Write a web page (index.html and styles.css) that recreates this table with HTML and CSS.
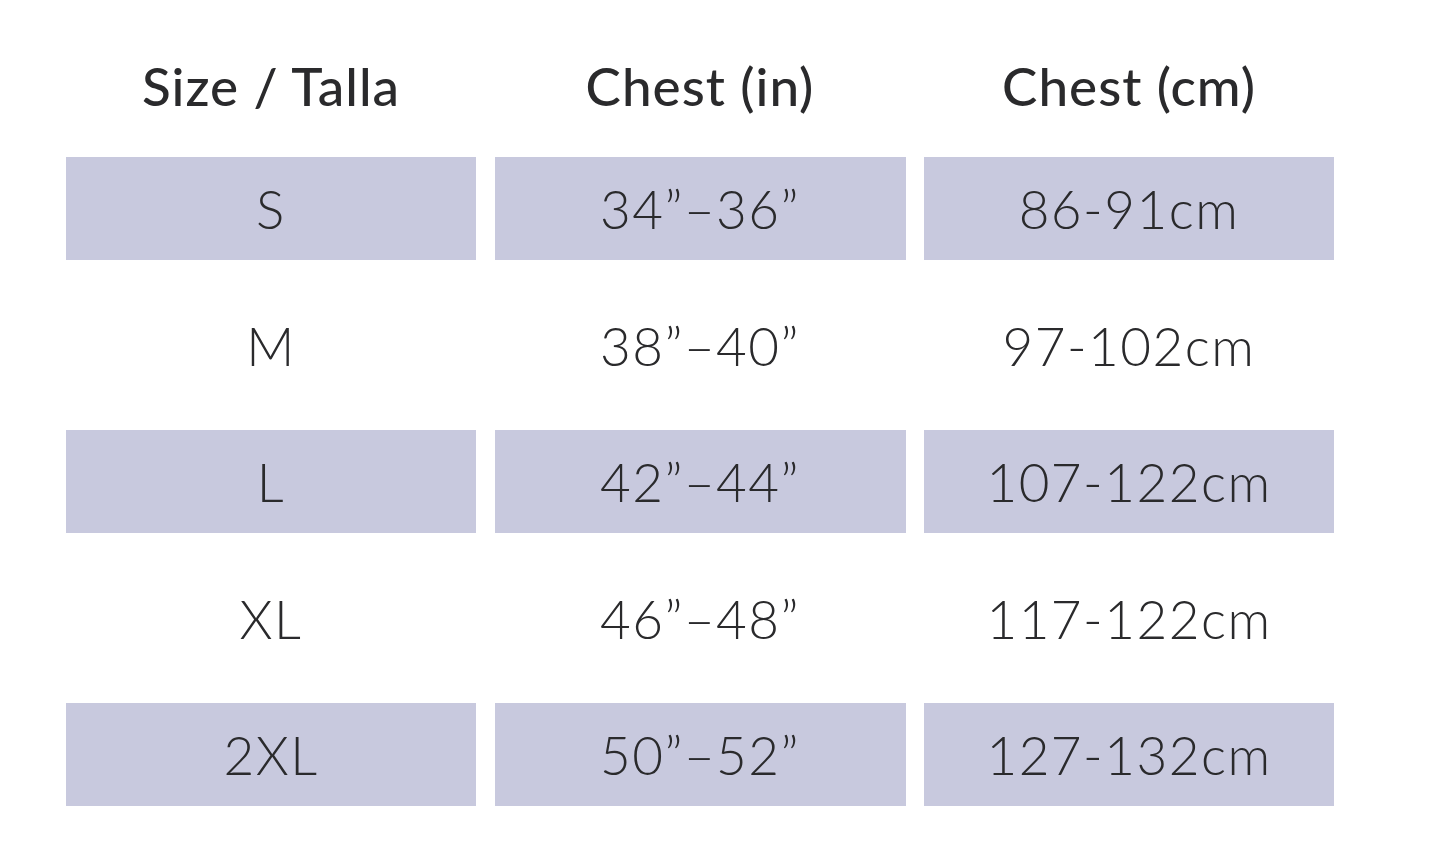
FILE: index.html
```html
<!DOCTYPE html>
<html lang="en">
<head>
<meta charset="utf-8">
<title>Size chart</title>
<link rel="stylesheet" href="styles.css">
</head>
<body>
<div class="chart">
  <div class="row head">
    <div class="cell">Size / Talla</div>
    <div class="cell">Chest (in)</div>
    <div class="cell">Chest (cm)</div>
  </div>
  <div class="row shaded">
    <div class="cell">S</div>
    <div class="cell">34”–36”</div>
    <div class="cell">86-91cm</div>
  </div>
  <div class="row">
    <div class="cell">M</div>
    <div class="cell">38”–40”</div>
    <div class="cell">97-102cm</div>
  </div>
  <div class="row shaded">
    <div class="cell">L</div>
    <div class="cell">42”–44”</div>
    <div class="cell">107-122cm</div>
  </div>
  <div class="row">
    <div class="cell">XL</div>
    <div class="cell">46”–48”</div>
    <div class="cell">117-122cm</div>
  </div>
  <div class="row shaded">
    <div class="cell">2XL</div>
    <div class="cell">50”–52”</div>
    <div class="cell">127-132cm</div>
  </div>
</div>
</body>
</html>
```
FILE: styles.css
```css
html, body {
  margin: 0;
  padding: 0;
  background: #ffffff;
}
body {
  font-family: Lato, "Open Sans", sans-serif;
  color: #2a2a2c;
}
.chart {
  display: flex;
  flex-direction: column;
  gap: 33.5px;
  padding: 50px 0 0 66px;
  width: 1268px;
}
.row {
  display: grid;
  grid-template-columns: 410px 411px 410px;
  column-gap: 18.5px;
  height: 103px;
}
.cell {
  display: flex;
  align-items: center;
  justify-content: center;
  font-size: 53px;
  font-weight: 300;
  letter-spacing: 1.5px;
  white-space: nowrap;
}
.head {
  height: 70px;
  margin-bottom: 3.5px;
}
.head .cell {
  font-weight: 500;
  letter-spacing: 1px;
}
.shaded .cell {
  background: #c8c9de;
}
```
